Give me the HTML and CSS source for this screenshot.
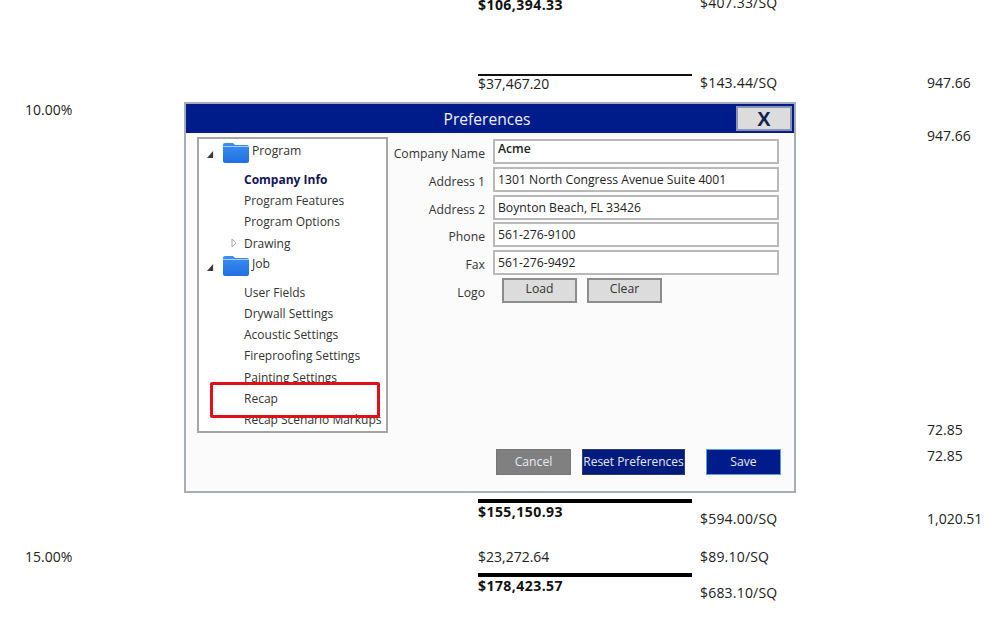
FILE: index.html
```html
<!DOCTYPE html>
<html lang="en">
<head>
<meta charset="utf-8">
<title>Preferences</title>
<link rel="stylesheet" href="styles.css">
</head>
<body>
<svg class="defs" width="0" height="0" aria-hidden="true"><defs><linearGradient id="fold" x1="0" y1="0" x2="0" y2="1"><stop offset="0" stop-color="#3d8ff2"/><stop offset="1" stop-color="#1f6fe0"/></linearGradient></defs></svg>
<main class="report">
  <div class="row r1"><span></span><span class="amt bold">$106,394.33</span><span class="sq up">$407.33/SQ</span><span></span></div>
  <div class="row r2"><span></span><span class="amt rule-thin">$37,467.20</span><span class="sq">$143.44/SQ</span><span>947.66</span></div>
  <div class="row r3"><span>10.00%</span><span></span><span></span><span></span></div>
  <div class="row r4"><span></span><span></span><span></span><span>947.66</span></div>
  <div class="row r5"><span></span><span></span><span></span><span>72.85</span></div>
  <div class="row r6"><span></span><span></span><span></span><span>72.85</span></div>
  <div class="row r7"><span></span><span class="amt bold rule-thick">$155,150.93</span><span class="sq down">$594.00/SQ</span><span class="down">1,020.51</span></div>
  <div class="row r8"><span>15.00%</span><span>$23,272.64</span><span class="sq">$89.10/SQ</span><span></span></div>
  <div class="row r9"><span></span><span class="amt bold rule-thick">$178,423.57</span><span class="sq down">$683.10/SQ</span><span></span></div>
</main>

<section class="dialog">
  <header class="titlebar">
    <h1 class="title">Preferences</h1>
    <button class="close" type="button">X</button>
  </header>
  <div class="body">
    <nav class="tree">
      <div class="group">
        <svg class="arrow" viewBox="0 0 8 8"><path d="M7 0V8H0Z" fill="#3a3a3a"/></svg>
        <svg class="folder" viewBox="0 0 26 20"><path d="M0 2Q0 0 2 0H10L12 2H24Q26 2 26 4V18Q26 20 24 20H2Q0 20 0 18Z" fill="url(#fold)"/><path d="M0 4H26V3H0Z" fill="#a4cdfb"/></svg>
        <span>Program</span>
      </div>
      <div class="items">
        <div class="item current">Company Info</div>
        <div class="item">Program Features</div>
        <div class="item">Program Options</div>
        <div class="item"><svg class="expander" viewBox="0 0 6 10"><path d="M1 1L5 5L1 9Z" fill="#fff" stroke="#aaa"/></svg>Drawing</div>
      </div>
      <div class="group second">
        <svg class="arrow" viewBox="0 0 8 8"><path d="M7 0V8H0Z" fill="#3a3a3a"/></svg>
        <svg class="folder" viewBox="0 0 26 20"><path d="M0 2Q0 0 2 0H10L12 2H24Q26 2 26 4V18Q26 20 24 20H2Q0 20 0 18Z" fill="url(#fold)"/><path d="M0 4H26V3H0Z" fill="#a4cdfb"/></svg>
        <span>Job</span>
      </div>
      <div class="items">
        <div class="item">User Fields</div>
        <div class="item">Drywall Settings</div>
        <div class="item">Acoustic Settings</div>
        <div class="item">Fireproofing Settings</div>
        <div class="item">Painting Settings</div>
        <div class="item">Recap</div>
        <div class="item">Recap Scenario Markups</div>
      </div>
      <div class="highlight"></div>
    </nav>
    <div class="panel">
      <form class="form">
        <div class="field"><label class="label">Company Name</label><div class="input strong">Acme</div></div>
        <div class="field"><label class="label">Address 1</label><div class="input">1301 North Congress Avenue Suite 4001</div></div>
        <div class="field"><label class="label">Address 2</label><div class="input">Boynton Beach, FL 33426</div></div>
        <div class="field"><label class="label">Phone</label><div class="input">561-276-9100</div></div>
        <div class="field"><label class="label">Fax</label><div class="input">561-276-9492</div></div>
        <div class="field logo"><label class="label">Logo</label><button class="btn" type="button">Load</button><button class="btn" type="button">Clear</button></div>
      </form>
      <div class="actions">
        <button class="act cancel" type="button">Cancel</button>
        <button class="act reset" type="button">Reset Preferences</button>
        <button class="act save" type="button">Save</button>
      </div>
    </div>
  </div>
</section>
</body>
</html>
```
FILE: styles.css
```css
* { box-sizing: border-box; }
html, body { height: 100%; overflow: hidden; }
body {
  margin: 0;
  background: #fff;
  color: #222;
  font-family: "Open Sans", "Noto Sans", sans-serif;
  font-size: 14px;
  position: relative;
}
.defs { position: absolute; }
.report { margin-top: -5px; padding-left: 25px; }
.row {
  display: grid;
  grid-template-columns: 453px 222px 227px 1fr;
  line-height: 20px;
  align-items: start;
}
.r1 { height: 79px; }
.r2 { height: 26px; line-height: 18px; }
.r2 .amt { line-height: 16px; }
.r3 { height: 26px; }
.r4 { height: 294px; }
.r5 { height: 26px; }
.r6 { height: 53px; }
.r7 { height: 48px; line-height: 18px; }
.r8 { height: 26px; }
.r9 { line-height: 18px; }
.amt { width: 214px; }
.bold { font-weight: 700; color: #111; letter-spacing: .45px; }
.sq { letter-spacing: .2px; }
.rule-thin { border-top: 2px solid #111; }
.rule-thick { border-top: 4px solid #000; }
.up { margin-top: -2px; }
.down { margin-top: 11px; }

.dialog {
  position: absolute;
  left: 184px;
  top: 102px;
  width: 612px;
  height: 391px;
  border: 2px solid #a9adb5;
  background: #fbfbfb;
  display: flex;
  flex-direction: column;
  font-size: 12.2px;
  color: #333;
}
.titlebar {
  height: 29px;
  flex: none;
  background: #001b8a;
  display: flex;
  align-items: center;
  justify-content: center;
  padding-right: 6px;
  position: relative;
}
.title { margin: 0; font-size: 15.6px; font-weight: 400; color: #eef0f8; }
.close {
  position: absolute;
  right: 2px;
  top: 2px;
  width: 56px;
  height: 25px;
  padding: 0 0 3px;
  border: 2px solid #8a93b0;
  background: #dcdcdc;
  color: #11234a;
  font: 700 20px "Liberation Sans", sans-serif;
}
.body { flex: 1; display: flex; padding: 4px 0 0 11px; min-height: 0; }
.tree {
  width: 191px;
  height: 296px;
  flex: none;
  border: 2px solid #a5a5a5;
  background: #fff;
  position: relative;
  overflow: hidden;
  padding-top: 1px;
}
.group { height: 29px; display: flex; align-items: flex-start; position: relative; padding-left: 8px; }
.second { margin-top: -1px; }
.group span { line-height: 22px; margin-left: 3px; }
.arrow { width: 7px; height: 7px; margin-top: 11px; }
.folder { width: 26px; height: 20px; margin: 3px 0 0 9px; }
.items { padding-left: 45px; font-size: 12px; }
.item { height: 21.2px; line-height: 21px; position: relative; white-space: nowrap; }
.current { font-weight: 700; color: #14145a; }
.expander { position: absolute; left: -13px; top: 5px; width: 6px; height: 10px; }
.highlight {
  position: absolute;
  left: 11px;
  top: 243px;
  width: 170px;
  height: 36px;
  border: 3px solid #e01016;
  border-radius: 2px;
}
.panel { flex: 1; display: flex; flex-direction: column; padding: 2px 13px 16px 5px; }
.form { display: flex; flex-direction: column; gap: 2.75px; padding-right: 2px; }
.field { display: flex; align-items: flex-start; height: 25px; }
.label { width: 92px; text-align: right; margin-right: 8px; padding-top: 6px; flex: none; white-space: nowrap; }
.input {
  flex: 1;
  height: 25px;
  border: 2px solid #b9b9b9;
  background: #fff;
  padding: 1px 0 0 3px;
  line-height: 19px;
  color: #222;
}
.strong { font-weight: 600; padding-top: 0; line-height: 15px; }
.logo .label { margin-right: 17px; }
.btn {
  width: 75px;
  height: 25px;
  margin-right: 10px;
  padding: 0 0 4px;
  border: 2px solid #8c8c8c;
  background: #dcdcdc;
  color: #333;
  font: 12.2px "Open Sans", sans-serif;
}
.actions { margin-top: auto; display: flex; justify-content: flex-end; align-items: center; }
.act {
  height: 26px;
  padding: 0 0 1px;
  color: #e8e8f0;
  font: 12.2px "Open Sans", sans-serif;
  white-space: nowrap;
}
.cancel { width: 75px; background: #808080; border: 1px solid #777; margin-right: 11px; }
.reset { width: 103px; background: #001b7e; border: 1px solid #333c66; margin-right: 21px; letter-spacing: -.03px; font-size: 12px; }
.save { width: 75px; background: #001b8a; border: 1px solid #5aa0e0; }
```
